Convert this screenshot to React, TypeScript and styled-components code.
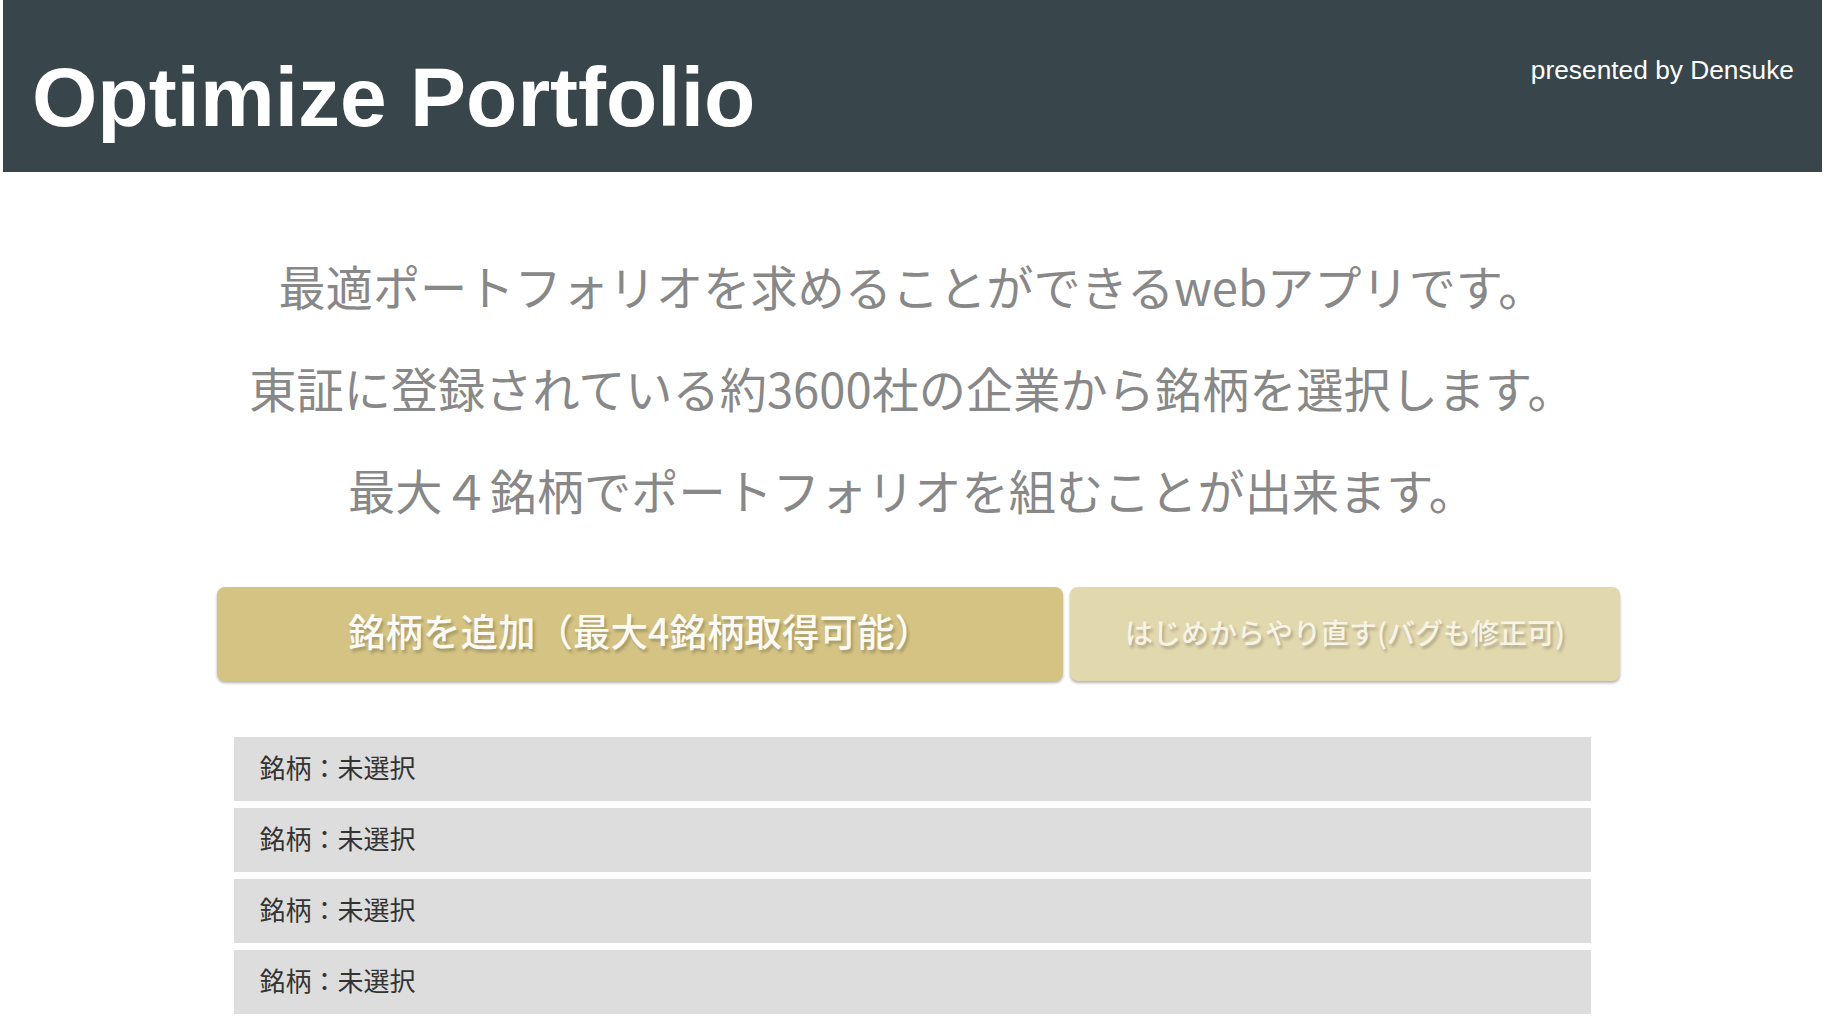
import styled, { createGlobalStyle } from "styled-components";

const GlobalStyle = createGlobalStyle`
  html, body {
    margin: 0;
    padding: 0;
    background: #ffffff;
  }
  body {
    font-family: "Noto Sans CJK JP", "Noto Sans", sans-serif;
  }
`;

const rows = ["銘柄：未選択", "銘柄：未選択", "銘柄：未選択", "銘柄：未選択"];

export default function App() {
  return (
    <>
      <GlobalStyle />
      <Header>
        <Title>Optimize Portfolio</Title>
        <Presenter>presented by Densuke</Presenter>
      </Header>

      <Intro>
        <p>最適ポートフォリオを求めることができるwebアプリです。</p>
        <p>東証に登録されている約3600社の企業から銘柄を選択します。</p>
        <p>最大４銘柄でポートフォリオを組むことが出来ます。</p>
      </Intro>

      <ButtonRow>
        <ActionButton $variant="add">銘柄を追加（最大4銘柄取得可能）</ActionButton>
        <ActionButton $variant="reset">はじめからやり直す(バグも修正可)</ActionButton>
      </ButtonRow>

      <StockList>
        {rows.map((label, index) => (
          <StockRow key={index}>{label}</StockRow>
        ))}
      </StockList>
    </>
  );
}

const Header = styled.header`
  margin: 0 2px 0 3px;
  height: 172px;
  background-color: #38454a;
  display: flex;
  justify-content: space-between;
  align-items: flex-start;
  padding: 0 28px 0 29px;
  box-sizing: border-box;
`;

const Title = styled.h1`
  margin: 0;
  padding-top: 55px;
  font-family: "Liberation Sans", Arial, sans-serif;
  font-size: 84px;
  font-weight: bold;
  line-height: 84px;
  color: #ffffff;
`;

const Presenter = styled.div`
  padding-top: 57px;
  font-family: "Liberation Sans", Arial, sans-serif;
  font-size: 26.3px;
  line-height: 26px;
  color: #ffffff;
`;

const Intro = styled.section`
  margin-top: 63px;
  text-align: center;
  color: #888888;
  & > p {
    margin: 0;
    font-size: 47.2px;
    line-height: 102px;
    white-space: nowrap;
  }
`;

const ButtonRow = styled.div`
  margin-top: 46px;
  display: flex;
  justify-content: center;
  gap: 7px;
  padding-left: 13px;
`;

const ActionButton = styled.button<{ $variant: "add" | "reset" }>`
  height: 94px;
  width: ${(p) => (p.$variant === "add" ? "846px" : "550px")};
  border: none;
  border-radius: 8px;
  background-color: ${(p) => (p.$variant === "add" ? "#d4c383" : "#e2d8ae")};
  box-shadow: 0 2px 3px rgba(0, 0, 0, 0.3);
  font-family: "Noto Sans CJK JP", sans-serif;
  font-size: ${(p) => (p.$variant === "add" ? "37.5px" : "28px")};
  font-weight: 500;
  color: ${(p) => (p.$variant === "add" ? "#fbfaf4" : "#f7f3e6")};
  text-shadow: 2px 3px 3px rgba(0, 0, 0, 0.22);
  white-space: nowrap;
  cursor: pointer;
  padding: 0 0 ${(p) => (p.$variant === "add" ? "9px" : "4px")};
`;

const StockList = styled.div`
  margin: 56px auto 0;
  width: 1357px;
  display: flex;
  flex-direction: column;
  gap: 7px;
`;

const StockRow = styled.div`
  height: 64px;
  box-sizing: border-box;
  background-color: #dddddd;
  display: flex;
  align-items: center;
  padding: 0 0 6px 26px;
  font-size: 26px;
  color: #333333;
`;
